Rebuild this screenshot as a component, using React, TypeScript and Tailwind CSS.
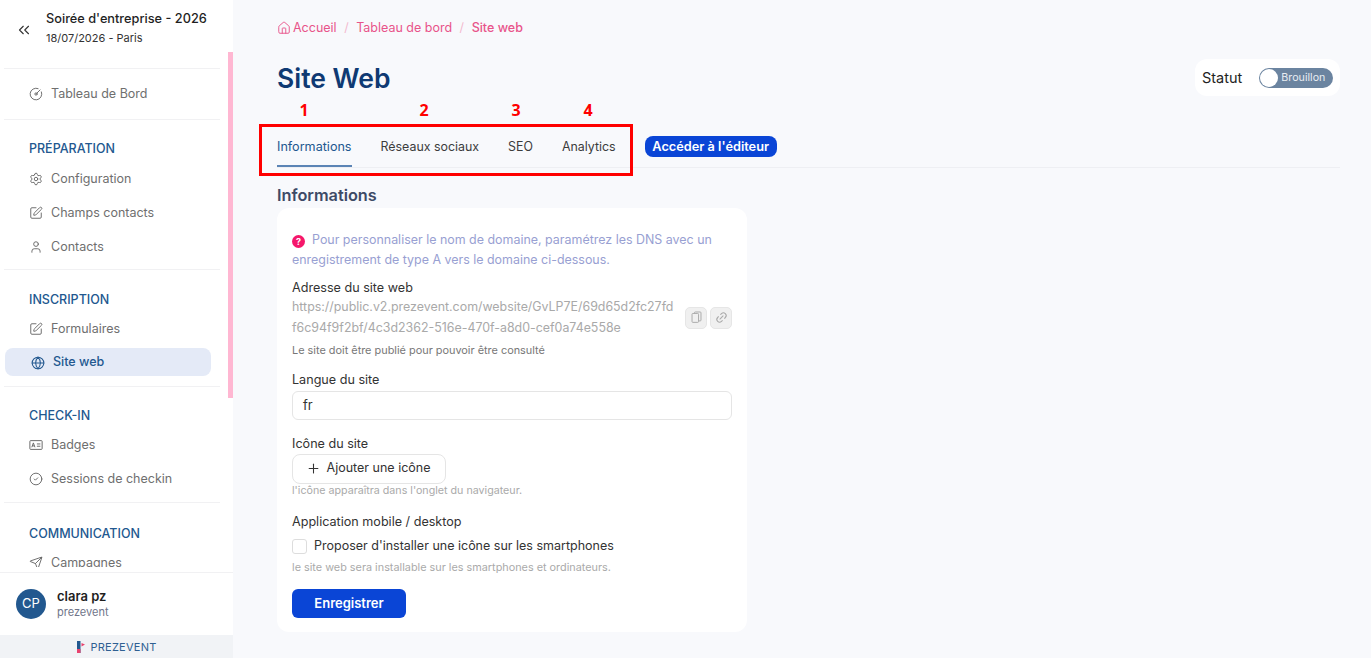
import React from "react";
import { ChevronsLeft, CircleGauge, Settings, SquarePen, User, Globe, CircleCheck, Send, House, Link2, Plus } from "lucide-react";

function BadgeIcon({ size = 15, className = "" }: { size?: number; strokeWidth?: number; className?: string }) {
  return (
    <svg width={size} height={size} viewBox="0 0 16 16" fill="none" stroke="currentColor" strokeWidth="1.1" className={className}>
      <rect x="1" y="3" width="14" height="10" rx="0.8" />
      <path d="M3.2 10.6 5 5.6l1.8 5M3.9 9h2.2M9 6.8h4M9 9.4h4" />
    </svg>
  );
}

function CopyIcon() {
  return (
    <svg width="13" height="13" viewBox="0 0 16 16" fill="none" stroke="currentColor" strokeWidth="1.2">
      <rect x="2.5" y="3" width="8" height="11" rx="1" />
      <path d="M5.5 3V2.2a1 1 0 0 1 1-1h6a1 1 0 0 1 1 1v9a1 1 0 0 1-1 1h-2" />
    </svg>
  );
}

function NavItem({ icon: Icon, label }: { icon: any; label: string }) {
  return (
    <div className="flex h-[34px] items-center gap-[8px] pl-[29px] text-[12.5px] text-[#6f6f6f]">
      <Icon size={14} strokeWidth={1.6} className="text-[#666]" />
      <span>{label}</span>
    </div>
  );
}

function Heading({ children }: { children: React.ReactNode }) {
  return <div className="h-[24px] pl-[29px] text-[12.5px] leading-[24px] font-medium text-[#22588f]">{children}</div>;
}

function Sep() {
  return <div className="mx-[4px] w-[216px] border-t border-[#f1f1f3]" />;
}

function Sidebar() {
  return (
    <aside className="relative flex h-[658px] w-[233px] shrink-0 flex-col bg-white">
      <div className="flex h-[68px] shrink-0 items-center pb-[14px] pl-[15px]">
        <ChevronsLeft size={18} strokeWidth={1.5} className="mt-[5px] mr-[13px] text-[#333]" />
        <div>
          <div className="text-[12.75px] leading-[20px] font-medium text-[#1f1f1f]">Soirée d'entreprise - 2026</div>
          <div className="mt-[1px] text-[11px] leading-[16px] text-[#333]">18/07/2026 - Paris</div>
        </div>
      </div>
      <Sep />
      <div className="mb-[5px] h-[498px] shrink-0 overflow-hidden">
        <div className="mt-[8px] mb-[8px]"><NavItem icon={CircleGauge} label="Tableau de Bord" /></div>
        <Sep />
        <div className="mt-[17px]"><Heading>PRÉPARATION</Heading></div>
        <div className="mt-[1px] mb-[5px]">
          <NavItem icon={Settings} label="Configuration" />
          <NavItem icon={SquarePen} label="Champs contacts" />
          <NavItem icon={User} label="Contacts" />
        </div>
        <Sep />
        <div className="mt-[18px]"><Heading>INSCRIPTION</Heading></div>
        <NavItem icon={SquarePen} label="Formulaires" />
        <div className="mx-[5px] mt-[2px] flex h-[28px] w-[206px] items-center gap-[8px] rounded-lg bg-[#e4eaf7] pt-[1px] pl-[26px] text-[12.5px] font-medium text-[#22588f]">
          <Globe size={14} strokeWidth={1.8} />
          <span>Site web</span>
        </div>
        <div className="mt-[10px]"><Sep /></div>
        <div className="mt-[17px]"><Heading>CHECK-IN</Heading></div>
        <div className="mb-[6px]">
          <NavItem icon={BadgeIcon} label="Badges" />
          <NavItem icon={CircleCheck} label="Sessions de checkin" />
        </div>
        <Sep />
        <div className="mt-[19px]"><Heading>COMMUNICATION</Heading></div>
        <NavItem icon={Send} label="Campagnes" />
      </div>
      <div className="flex flex-1 items-center gap-[11px] border-t border-[#f1f1f3] pb-[1px] pl-[16px]">
        <div className="flex h-[30px] w-[30px] items-center justify-center rounded-full bg-[#22588f] text-[13px] text-white">CP</div>
        <div>
          <div className="text-[13px] leading-[18px] font-semibold text-[#1f1f1f]">clara pz</div>
          <div className="text-[11px] leading-[15px] text-[#70758a]">prezevent</div>
        </div>
      </div>
      <div className="flex h-[23px] shrink-0 items-center justify-center gap-[4px] bg-[#f1f3f6]">
        <svg width="10" height="14" viewBox="0 0 10 14">
          <path d="M1 1h3.5v12H1z" fill="#22588f" />
          <path d="M1 9h3.5v4H1z" fill="#e8436f" />
          <path d="M5.5 3l3.5 1.6-3.5 1.9z" fill="#e8436f" />
        </svg>
        <span className="text-[11px] leading-[14px] tracking-[0.25px] text-[#2f5f92]">PREZEVENT</span>
      </div>
      <div className="absolute top-[52px] right-0 h-[346px] w-[5px] bg-[#ffb7d2]" />
    </aside>
  );
}

function Tab({ label, active }: { label: string; active?: boolean }) {
  return (
    <div className={"flex h-[46px] items-center border-b-2 pt-[9px] " + (active ? "border-[#5b84b5] text-[12.6px] text-[#22588f]" : "border-transparent text-[12.4px] text-[#3c3c3c]")}>
      {label}
    </div>
  );
}

function Label({ children }: { children: React.ReactNode }) {
  return <div className="text-[12.6px] leading-[18px] text-[#333]">{children}</div>;
}

function Card() {
  return (
    <div className="w-[470px] rounded-xl bg-white px-[15px] pt-[22px] pb-[14px]">
      <p className="text-[12.45px] leading-[20px] text-[#98a0d2]">
        <span className="mr-[7px] inline-flex h-[13px] w-[13px] translate-y-[1px] items-center justify-center rounded-full bg-[#f5176b] text-[9px] leading-none font-bold text-white">?</span>
        Pour personnaliser le nom de domaine, paramétrez les DNS avec un enregistrement de type A vers le domaine ci-dessous.
      </p>
      <div className="mt-[9px]"><Label>Adresse du site web</Label></div>
      <div className="flex items-center justify-between">
        <div className="w-[388px] text-[12.4px] leading-[20.5px] text-[#a9a9a9]">
          https://public.v2.prezevent.com/website/GvLP7E/69d65d2fc27fd
          <br />
          f6c94f9f2bf/4c3d2362-516e-470f-a8d0-cef0a74e558e
        </div>
        <div className="flex gap-[3px]">
          <div className="flex h-[22px] w-[22px] items-center justify-center rounded-[5px] border border-[#e6e6e6] bg-[#f0f0f0] text-[#aaa]"><CopyIcon /></div>
          <div className="flex h-[22px] w-[22px] items-center justify-center rounded-[5px] border border-[#e6e6e6] bg-[#f0f0f0] text-[#aaa]"><Link2 size={13} className="-rotate-45" /></div>
        </div>
      </div>
      <div className="mt-[5px] text-[10.9px] leading-[14px] text-[#777]">Le site doit être publié pour pouvoir être consulté</div>
      <div className="mt-[14px]"><Label>Langue du site</Label></div>
      <div className="mt-[2px] flex h-[29px] items-center rounded-md border border-[#e5e5e5] pl-[10px] text-[13px] text-[#333]">fr</div>
      <div className="mt-[15px]"><Label>Icône du site</Label></div>
      <div className="mt-[1px] flex h-[30px] w-[154px] items-center justify-center gap-[6px] rounded-lg border border-[#e5e5e5] pr-[2px] pb-[2px] text-[12.5px] text-[#333]">
        <Plus size={15} strokeWidth={1.7} />
        <span>Ajouter une icône</span>
      </div>
      <div className="text-[10.7px] leading-[14px] text-[#aaa]">l'icône apparaîtra dans l'onglet du navigateur.</div>
      <div className="mt-[15px]"><Label>Application mobile / desktop</Label></div>
      <div className="mt-[6px] flex h-[18px] items-center gap-[7px] text-[12.5px] text-[#333]">
        <span className="h-[15px] w-[15px] rounded-[3px] border border-[#ddd]" />
        <span>Proposer d'installer une icône sur les smartphones</span>
      </div>
      <div className="mt-[5px] text-[10.85px] leading-[14px] text-[#aaa]">le site web sera installable sur les smartphones et ordinateurs.</div>
      <div className="mt-[15px] flex h-[29px] w-[114px] items-center justify-center rounded-md bg-[#0a45d6] text-[13px] font-semibold text-white">Enregistrer</div>
    </div>
  );
}

export default function App() {
  return (
    <div className="relative flex h-[658px] w-[1371px] overflow-hidden bg-[#f8f9fc]" style={{ fontFamily: "Inter, sans-serif" }}>
      <Sidebar />
      <main className="flex-1 pt-[20px] pr-[31px] pl-[44px]">
        <div className="flex h-[16px] items-center text-[12.5px] text-[#e8548a]">
          <House size={14} strokeWidth={1.6} className="mr-[2px]" />
          <span>Accueil</span>
          <span className="mx-[7.5px] text-[#f3b9cf]">/</span>
          <span>Tableau de bord</span>
          <span className="mx-[7.5px] text-[#f3b9cf]">/</span>
          <span className="font-medium">Site web</span>
        </div>
        <div className="mt-[22px] flex items-center justify-between">
          <h1 className="text-[26.5px] leading-[40px] font-semibold text-[#0f3a73]">Site Web</h1>
          <div className="-mt-[1px] flex h-[37px] w-[145px] items-center gap-[17px] rounded-xl bg-white pl-[7px]">
            <span className="text-[14.5px] text-[#222]">Statut</span>
            <div className="flex h-[20px] w-[74px] items-center rounded-full bg-[#6b84a0] pl-[1px]">
              <span className="h-[18px] w-[18px] rounded-full bg-white" />
              <span className="mt-[1px] ml-[3px] text-[10.7px] text-[#e8edf3]">Brouillon</span>
            </div>
          </div>
        </div>
        <div className="mt-[23px] flex items-start border-b border-[#eeeff3]">
          <div className="flex gap-[29px]">
            <Tab label="Informations" active />
            <Tab label="Réseaux sociaux" />
            <Tab label="SEO" />
            <Tab label="Analytics" />
          </div>
          <div className="mt-[15px] ml-[29px] flex h-[21px] w-[132px] items-center justify-center rounded-lg bg-[#0a45d6] text-[12.75px] font-semibold text-white">Accéder à l'éditeur</div>
        </div>
        <h2 className="mt-[17px] mb-[3px] text-[16.3px] leading-[20px] font-semibold text-[#3d4a66]">Informations</h2>
        <Card />
      </main>
      <div className="absolute top-[124px] left-[259px] h-[52px] w-[374px] border-[3px] border-[#ff0000]" />
      {[["1", 304], ["2", 424], ["3", 516], ["4", 588]].map(([n, x]) => (
        <span key={n} className="absolute top-[99px] w-[12px] -translate-x-1/2 text-center text-[16px] leading-[22px] font-bold text-[#ff0000]" style={{ left: x as number, fontFamily: "'Open Sans', sans-serif" }}>{n}</span>
      ))}
    </div>
  );
}
